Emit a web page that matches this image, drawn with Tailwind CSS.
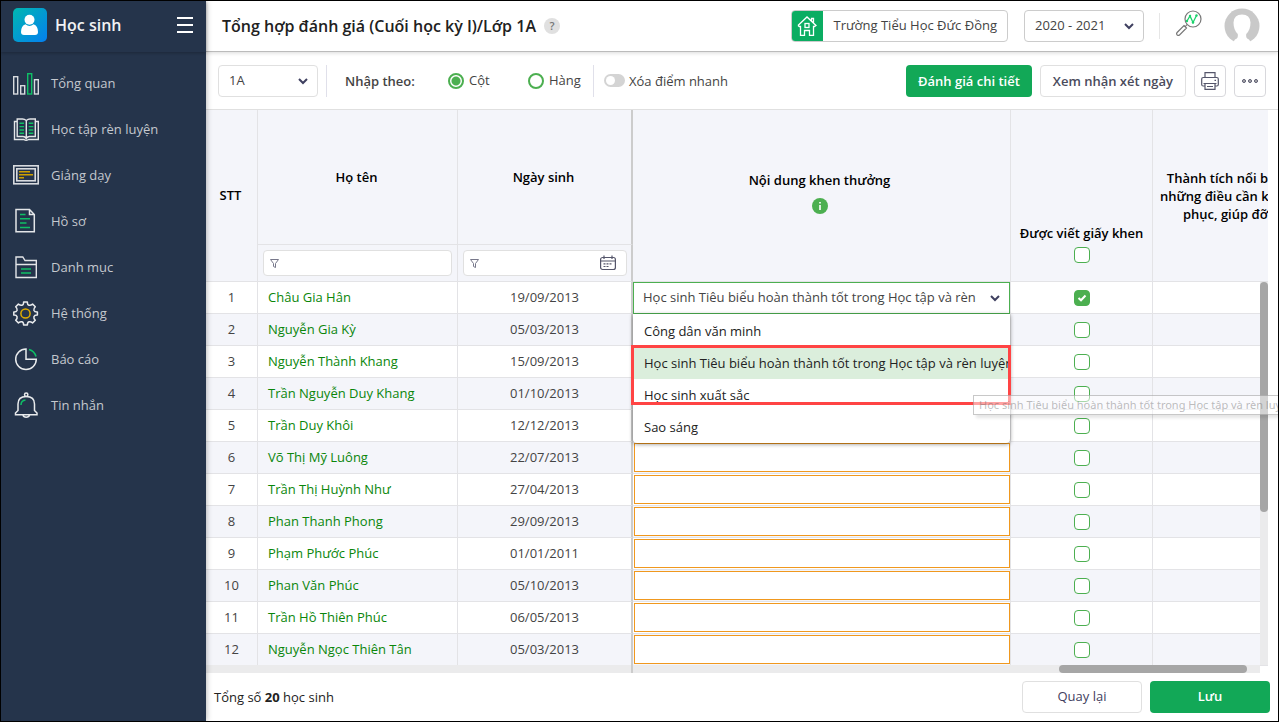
<!DOCTYPE html>
<html lang="vi">
  <head>
    <meta charset="UTF-8" />
    <meta name="viewport" content="width=device-width, initial-scale=1.0" />
    <title>Tổng hợp đánh giá</title>
    <script src="https://cdn.jsdelivr.net/npm/@tailwindcss/browser@4"></script>
  </head>
  <body class="flex h-screen overflow-hidden border border-black bg-white font-['Open_Sans',sans-serif] text-[13px] text-[#444]">
    <!-- Sidebar -->
    <aside class="relative z-10 flex w-[205px] shrink-0 flex-col bg-[#25344b] text-[#c4c8ce] shadow-[0_0_6px_rgba(0,0,0,0.35)]">
      <div class="flex h-[51px] items-center pl-3 pr-[13px] pb-1 shadow-[0_1px_3px_rgba(0,0,0,0.25)]">
        <svg class="size-[34px]" viewBox="0 0 34 34">
          <defs>
            <linearGradient id="logo" x1="0" y1="0" x2="1" y2="1">
              <stop offset="0" stop-color="#00b8b0" />
              <stop offset="1" stop-color="#047ff0" />
            </linearGradient>
          </defs>
          <rect width="34" height="34" rx="5" fill="url(#logo)" />
          <circle cx="16.500" cy="11.800" r="5" fill="#fff" />
          <path d="M12.500 16.300Q16.500 19.500 20.500 16.300Q25 18 25 24Q25 27 22 27H11Q8 27 8 24Q8 18 12.500 16.300Z" fill="#fff" />
        </svg>
        <span class="ml-2 flex-1 text-base font-semibold text-[#f1f2f4]">Học sinh</span>
        <button aria-label="Thu gọn menu">
          <svg class="size-4" viewBox="0 0 16 16" fill="#fff">
            <rect width="16" height="2" /><rect y="7" width="16" height="2" /><rect y="14" width="16" height="2" />
          </svg>
        </button>
      </div>
      <nav class="flex flex-col pt-2">
        <a href="#" class="flex h-[46px] items-center gap-3 pl-3">
          <svg class="size-[26px]" viewBox="0 0 26 26" fill="none" stroke="#d8dbdf" stroke-width="1.400">
            <rect x="0.700" y="6.700" width="4" height="17.300" /><rect x="7.700" y="15.700" width="4" height="8.300" />
            <rect x="14.700" y="3.700" width="4" height="20.300" stroke="#0fbf66" /><rect x="21.500" y="9.700" width="3.800" height="14.300" />
          </svg>
          <span class="pt-0.5">Tổng quan</span>
        </a>
        <a href="#" class="flex h-[46px] items-center gap-3 pl-3">
          <svg class="size-[26px]" viewBox="0 0 26 26" fill="none" stroke="#e3e5e8" stroke-width="1.400">
            <path d="M4 5.500H1.500V23.500H11Q13 25 15.500 23.500H25.300V5.500H22.500" />
            <path d="M13.300 4.500Q11.500 3 9.500 3H4.200V20.500H10Q12 20.500 13.300 22.500Q14.500 20.500 16.500 20.500H22.300V3H17Q15 3 13.300 4.500V22" />
            <path d="M6.500 7.200H11M6.500 10.600H11M6.500 14H11M6.500 17.300H11M15.700 7.200H20.300M15.700 10.600H20.300M15.700 14H20.300M15.700 17.300H20.300" stroke="#0fbf66" />
          </svg>
          <span class="pt-0.5">Học tập rèn luyện</span>
        </a>
        <a href="#" class="flex h-[46px] items-center gap-3 pl-3">
          <svg class="size-[26px]" viewBox="0 0 26 26" fill="none" stroke="#d8dbdf" stroke-width="1.600">
            <rect x="0.800" y="3.800" width="24.400" height="18" /><rect x="3.800" y="6.800" width="18.400" height="12" />
            <path d="M6 9.800H17M6 12.800H20M6 15.800H11" stroke="#cda000" />
          </svg>
          <span class="pt-0.5">Giảng dạy</span>
        </a>
        <a href="#" class="flex h-[46px] items-center gap-3 pl-3">
          <svg class="size-[26px]" viewBox="0 0 26 26" fill="none" stroke="#e3e5e8" stroke-width="1.500">
            <path d="M3 1.500H16.500L21.300 6.500V23.800H3ZM16.500 1.500V6.500H21.300" />
            <path d="M7 6.500H12.500M7 10.800H17M7 15H13.500M7 19.500H17" stroke="#0fbf66" />
          </svg>
          <span class="pt-0.5">Hồ sơ</span>
        </a>
        <a href="#" class="flex h-[46px] items-center gap-3 pl-3">
          <svg class="size-[26px]" viewBox="0 0 26 26" fill="none" stroke="#e3e5e8" stroke-width="1.400">
            <path d="M3 23.500V3H9.800L12 6.500H23.300V23.500ZM3 10.500H23.300" />
            <path d="M8 15H18M8 19H18" stroke="#0fbf66" />
          </svg>
          <span class="pt-0.5">Danh mục</span>
        </a>
        <a href="#" class="flex h-[46px] items-center gap-3 pl-3">
          <svg class="size-[26px]" viewBox="0 0 26 26" fill="none" stroke="#e9ebed" stroke-width="1.500" stroke-linejoin="round">
            <path d="M10.600 2H14.400Q14.300 5.200 16.200 5.200Q17.800 5.400 19.600 4.100L22.300 6.700Q20.500 8.500 20.900 10.200Q21.500 12 24.400 11.900V15.100Q21.500 15 20.900 16.800Q20.500 18.500 22.300 20.300L19.600 22.900Q17.800 21.600 16.200 21.800Q14.300 22 14.400 25H10.600Q10.700 22 8.800 21.800Q7.200 21.600 5.400 22.900L2.700 20.300Q4.500 18.500 4.100 16.800Q3.500 15 0.800 15.100V11.900Q3.500 12 4.100 10.200Q4.500 8.500 2.700 6.700L5.400 4.100Q7.200 5.400 8.800 5.200Q10.700 5.200 10.600 2Z" />
            <circle cx="12.500" cy="13.500" r="4.600" stroke="#e0ac00" />
          </svg>
          <span class="pt-0.5">Hệ thống</span>
        </a>
        <a href="#" class="flex h-[46px] items-center gap-3 pl-3">
          <svg class="size-[26px]" viewBox="0 0 26 26" fill="none" stroke="#e9ebed" stroke-width="1.500">
            <path d="M13 3A10.300 10.300 0 1 0 23.300 13.300H13Z" />
            <path d="M16 3.500Q21.500 5 23 10.500" stroke="#0fbf66" />
          </svg>
          <span class="pt-0.5">Báo cáo</span>
        </a>
        <a href="#" class="flex h-[46px] items-center gap-3 pl-3">
          <svg class="size-[26px]" viewBox="0 0 26 26" fill="none" stroke="#e9ebed" stroke-width="1.500">
            <path d="M5 18.500V12Q5 4.500 13.200 4.500Q21.500 4.500 21.500 12V18.500L24 21V22.700H2.500V21Z" />
            <circle cx="13.200" cy="2.800" r="1.700" /><path d="M10 23Q10.500 25.200 13.200 25.200Q16 25.200 16.500 23" />
            <path d="M8 13Q8 8.500 12.500 8" stroke="#0fbf66" />
          </svg>
          <span class="pt-0.5">Tin nhắn</span>
        </a>
      </nav>
    </aside>

    <main class="flex min-w-0 flex-1 flex-col">
      <!-- Top bar -->
      <header class="relative flex h-[51px] shrink-0 items-center border-b border-[#bbb] pl-4 pr-[18px] shadow-[0_1px_4px_rgba(0,0,0,0.15)]">
        <h1 class="text-base font-semibold text-[#212121]">Tổng hợp đánh giá (Cuối học kỳ I)/Lớp 1A</h1>
        <button class="ml-2 size-4 rounded-full bg-[#e0e0e0] text-[11px] font-semibold leading-4 text-[#757575]">?</button>
        <div class="ml-auto flex h-8 items-center overflow-hidden rounded border border-[#ccc] pr-[10px]">
          <span class="-my-px -ml-px flex size-8 items-center justify-center bg-[#0bad62]">
            <svg class="size-5" viewBox="0 0 20 20" fill="none" stroke="#fff" stroke-width="1.300">
              <path d="M1 9.500L10 1L19 9.500L17.500 10.500H16.500V19.300H12.500V14.500H7.500V19.300H3.500V10.500H2.300L1 9.500M14.500 5V2.500H16.500V7" />
              <rect x="8" y="7.500" width="4" height="4" />
            </svg>
          </span>
          <span class="pl-[11px]">Trường Tiểu Học Đức Đồng</span>
        </div>
        <div class="relative ml-4 w-[120px]">
          <select aria-label="Năm học" class="h-8 w-full appearance-none rounded border border-[#ccc] px-[10px]">
            <option>2020 - 2021</option>
          </select>
          <svg class="pointer-events-none absolute right-[10px] top-3 h-2 w-[10px]" viewBox="0 0 10 8" fill="none" stroke="#3f4060" stroke-width="2"><path d="M1 2L5 6L9 2" /></svg>
        </div>
        <span class="ml-[15px] h-[26px] w-px bg-[#e6e6e6]"></span>
        <button class="ml-4" aria-label="Tra cứu">
          <svg class="size-7 overflow-visible" viewBox="0.500 2.500 28 28" fill="none" stroke="#777" stroke-width="1.200">
            <circle cx="17.500" cy="9.500" r="8" /><path d="M11.500 15L9.500 17.500M8.500 16L11 18.500L3.800 25.700Q2 26.500 1.300 25Q0.700 24 1.600 23Z" />
            <path d="M11.500 11.500L14.500 6.500L17.500 13L21 6" stroke="#19d36b" stroke-width="1.300" />
            <g fill="#19d36b" stroke="none"><circle cx="11.500" cy="11.500" r="1.200" /><circle cx="14.500" cy="6.500" r="1.200" /><circle cx="17.500" cy="13" r="1.200" /><circle cx="21" cy="6" r="1.200" /></g>
          </svg>
        </button>
        <button class="ml-5" aria-label="Tài khoản">
          <svg class="size-9" viewBox="0 0 36 36">
            <circle cx="18" cy="18" r="17.500" fill="#c9c9c9" />
            <path d="M8 36L11 31.500Q14.500 30.500 13.800 26Q9.500 22 9.500 14.500Q10 6.500 18 6.500Q26 6.500 26.500 14.500Q26.500 22 22.200 26Q21.500 30.500 25 31.500L28 36Z" fill="#fff" />
          </svg>
        </button>
      </header>

      <!-- Toolbar -->
      <div class="flex h-[58px] shrink-0 items-center border-b border-[#e0e0e0] pl-3 pr-3">
        <div class="relative w-[100px]">
          <select aria-label="Lớp" class="h-8 w-full appearance-none rounded border border-[#e0e0e0] px-[10px]">
            <option>1A</option>
          </select>
          <svg class="pointer-events-none absolute right-[10px] top-3 h-2 w-[10px]" viewBox="0 0 10 8" fill="none" stroke="#3f4060" stroke-width="2"><path d="M1 2L5 6L9 2" /></svg>
        </div>
        <span class="ml-2 h-8 w-px bg-[#e0e0ea]"></span>
        <span class="ml-[18px] w-[103px] pt-0.5 font-semibold">Nhập theo:</span>
        <label class="flex w-20 items-center gap-[5px]">
          <input type="radio" name="mode" checked class="size-4 appearance-none rounded-full border-2 border-[#4caf50] checked:bg-[radial-gradient(circle,#4caf50_4px,transparent_5px)]" />
          Cột
        </label>
        <label class="flex w-[65px] items-center gap-[5px]">
          <input type="radio" name="mode" class="size-4 appearance-none rounded-full border-2 border-[#4caf50] checked:bg-[radial-gradient(circle,#4caf50_4px,transparent_5px)]" />
          Hàng
        </label>
        <span class="h-8 w-px bg-[#e0e0ea]"></span>
        <label class="ml-[10px] flex items-center gap-1">
          <input type="checkbox" role="switch" class="h-[13px] w-[21px] appearance-none rounded-full border-2 border-[#d4d4d4] bg-[#d4d4d4] before:block before:size-[9px] before:rounded-full before:bg-white checked:bg-[#4caf50]" />
          <span class="pt-0.5">Xóa điểm nhanh</span>
        </label>
        <div class="ml-auto flex gap-2">
          <button class="h-8 rounded bg-[#12a857] px-3 pt-0.5 font-semibold text-white">Đánh giá chi tiết</button>
          <button class="h-8 rounded border border-[#e0e0e0] px-3 pt-0.5 font-semibold text-[#4a4b5c]">Xem nhận xét ngày</button>
          <button class="flex size-8 items-center justify-center rounded border border-[#d8d8dc]" aria-label="In">
            <svg class="size-[18px]" viewBox="0 0 18 18" fill="none" stroke="#55566b" stroke-width="1.200">
              <path d="M4 5.500V0.700H14V5.500M4 14H2.200Q0.700 14 0.700 12.500V7Q0.700 5.500 2.200 5.500H15.800Q17.300 5.500 17.300 7V12.500Q17.300 14 15.800 14H14M2.500 11.500H15.500M4 11.500V17.300H14V11.500M6 14.500H12M13.500 8.300H15" />
            </svg>
          </button>
          <button class="flex size-8 items-center justify-center rounded border border-[#d8d8dc]" aria-label="Thêm">
            <svg class="h-4 w-4" viewBox="0 0 16 16" fill="#bbb" stroke="#55566b" stroke-width="1"><circle cx="2" cy="8" r="1.500" /><circle cx="8" cy="8" r="1.500" /><circle cx="14" cy="8" r="1.500" /></svg>
          </button>
        </div>
      </div>

      <!-- Grid -->
      <div class="relative mr-[10px] min-h-0 flex-1">
        <div class="h-full overflow-hidden">
          <table class="w-[calc(100%+32px)] table-fixed border-separate border-spacing-0">
            <colgroup>
              <col class="w-[52px]" />
              <col class="w-[200px]" />
              <col class="w-[175px]" />
              <col />
              <col class="w-[142px]" />
              <col class="w-[147px]" />
            </colgroup>
            <thead class="bg-[#f4f5fa] text-black">
              <tr class="h-[135px]">
                <th rowspan="2" class="border-b border-r border-[#e3e3e6] py-0 pl-0 pr-0.5 font-semibold">STT</th>
                <th class="border-b border-r border-[#e3e3e6] pb-0 pl-0 pr-0.5 pt-0.5 font-semibold">Họ tên</th>
                <th class="border-b border-r-2 border-b-[#e3e3e6] border-r-[#ccc] pb-0 pl-0 pr-0.5 pt-0.5 font-semibold">Ngày sinh</th>
                <th rowspan="2" class="border-b border-r border-[#e3e3e6] pb-[6px] pl-0 pr-1 pt-0 font-semibold">
                  Nội dung khen thưởng
                  <svg class="mx-auto mt-2 size-4" viewBox="0 0 16 16"><circle cx="8" cy="8" r="8" fill="#4caf50" /><path d="M7.200 4H8.800V5.500H7.200ZM7.200 7H8.800V12H7.200Z" fill="#fff" /></svg>
                </th>
                <th rowspan="2" class="border-b border-r border-[#e3e3e6] px-0 pb-[18px] pt-0 align-bottom font-semibold">
                  <label for="all">Được viết giấy khen</label>
                  <input id="all" type="checkbox" class="mx-auto mt-1 block size-4 appearance-none rounded border border-[#4caf50] bg-white" />
                </th>
                <th rowspan="2" class="border-b border-[#e3e3e6] py-0 pl-0 pr-0.5 font-semibold leading-[18px]">Thành tích nổi bật,<br />những điều cần khắc<br />phục, giúp đỡ</th>
              </tr>
              <tr class="h-[37px]">
                <th class="border-b border-r border-[#e3e3e6] px-[5px] py-0">
                  <label class="flex h-[26px] items-center rounded border border-[#e0e0e0] bg-white px-[6px]">
                    <svg class="h-[9px] w-[9px]" viewBox="0 0 9 9" fill="none" stroke="#77788a"><path d="M0.500 0.500H8.500L5.500 4.500V8.500L3.500 7.500V4.500Z" /></svg>
                    <input type="text" aria-label="Lọc họ tên" class="min-w-0 flex-1 px-1 font-normal outline-none" />
                  </label>
                </th>
                <th class="border-b border-r-2 border-b-[#e3e3e6] border-r-[#ccc] py-0 pl-[5px] pr-1">
                  <label class="flex h-[26px] items-center rounded border border-[#e0e0e0] bg-white pl-[6px] pr-[10px]">
                    <svg class="h-[9px] w-[9px]" viewBox="0 0 9 9" fill="none" stroke="#77788a"><path d="M0.500 0.500H8.500L5.500 4.500V8.500L3.500 7.500V4.500Z" /></svg>
                    <input type="text" aria-label="Lọc ngày sinh" class="min-w-0 flex-1 px-1 font-normal outline-none" />
                    <svg class="size-4" viewBox="0 0 16 16" fill="none" stroke="#55566b" stroke-width="1.200">
                      <rect x="0.600" y="2.500" width="14.800" height="12" rx="2" /><path d="M0.600 6H15.400M4 0.500V4M12 0.500V4" />
                      <path d="M3.500 8.800H12.500M3.500 11.500H9.500" stroke-dasharray="2 1" />
                    </svg>
                  </label>
                </th>
              </tr>
            </thead>
            <tbody id="rows"></tbody>
          </table>
        </div>

        <!-- scrollbars -->
        <div class="absolute bottom-2 right-0 top-[172px] w-2 bg-[#ebebec]">
          <div class="h-3/5 rounded bg-[#a6a6a6]"></div>
        </div>
        <div class="absolute bottom-0 left-0 right-2 h-2 bg-[#ebebec] pr-[13px]">
          <div class="ml-auto h-2 w-[188px] rounded bg-[#a6a6a6]"></div>
        </div>
        <div class="absolute bottom-0 left-[425px] h-2 w-[2px] bg-[#ccc]"></div>

        <div role="tooltip" class="absolute left-[767px] top-[285px] z-30 h-5 whitespace-nowrap border border-[#767676]/40 bg-white/50 px-[5px] font-['Noto_Sans',sans-serif] text-[11px] leading-[18px] text-[#575757]/40 shadow-[3px_3px_3px_rgba(0,0,0,0.1)]">
          Học sinh Tiêu biểu hoàn thành tốt trong Học tập và rèn luyện
        </div>
      </div>

      <!-- Footer -->
      <footer class="flex h-12 shrink-0 items-center gap-2 px-2">
        <p class="mr-auto pt-0.5 text-[#222]">Tổng số <b>20</b> học sinh</p>
        <button class="h-8 w-[120px] rounded border border-[#e0e0e0] text-[#3f4060]">Quay lại</button>
        <button class="h-8 w-[120px] rounded bg-[#12a857] font-semibold text-white">Lưu</button>
      </footer>
    </main>

    <script>
      const students = [
        ["Châu Gia Hân", "19/09/2013"],
        ["Nguyễn Gia Kỳ", "05/03/2013"],
        ["Nguyễn Thành Khang", "15/09/2013"],
        ["Trần Nguyễn Duy Khang", "01/10/2013"],
        ["Trần Duy Khôi", "12/12/2013"],
        ["Võ Thị Mỹ Luông", "22/07/2013"],
        ["Trần Thị Huỳnh Như", "27/04/2013"],
        ["Phan Thanh Phong", "29/09/2013"],
        ["Phạm Phước Phúc", "01/01/2011"],
        ["Phan Văn Phúc", "05/10/2013"],
        ["Trần Hồ Thiên Phúc", "06/05/2013"],
        ["Nguyễn Ngọc Thiên Tân", "05/03/2013"],
      ];

      // Row being edited: select with its open list
      const editor = `
        <select aria-label="Nội dung khen thưởng" class="-mb-px block h-8 w-full appearance-none border border-[#4caf50] bg-white pl-[9px] pr-8">
          <option>Học sinh Tiêu biểu hoàn thành tốt trong Học tập và rèn luyện</option>
        </select>
        <svg class="pointer-events-none absolute right-[10px] top-3 h-2 w-[10px]" viewBox="0 0 10 8" fill="none" stroke="#3f4060" stroke-width="2"><path d="M1 2L5 6L9 2" /></svg>
        <ul class="absolute inset-x-0 top-8 z-10 overflow-hidden rounded-b bg-white pt-px text-[#222] shadow-[0_1px_4px_rgba(0,0,0,0.45)]">
          <li class="h-8 whitespace-nowrap px-[11px] leading-8">Công dân văn minh</li>
          <li class="h-8 overflow-hidden whitespace-nowrap bg-[#dbeedc] px-[11px] leading-8">Học sinh Tiêu biểu hoàn thành tốt trong Học tập và rèn luyện</li>
          <li class="h-8 whitespace-nowrap px-[11px] leading-8">Học sinh xuất sắc</li>
          <li class="h-8 whitespace-nowrap px-[11px] leading-8">Sao sáng</li>
        </ul>
        <div class="absolute -left-[2px] -right-px top-[63px] z-20 h-[60px] border-3 border-[#ff4444]"></div>`;

      document.getElementById("rows").innerHTML = students
        .map(([name, birthday], i) => `
          <tr class="h-8 bg-white even:bg-[#f4f5fa]">
            <td class="border-b border-r border-[#e3e3e6] p-0 text-center">${i + 1}</td>
            <td class="border-b border-r border-[#e3e3e6] py-0 pl-[10px] pr-0"><a href="#" class="text-[#0a860a]">${name}</a></td>
            <td class="border-b border-r-2 border-b-[#e3e3e6] border-r-[#ccc] p-0 text-center">${birthday}</td>
            <td class="relative border-b border-r border-[#e3e3e6] p-0">
              ${i === 0 ? editor : `<div class="py-px pl-px"><input type="text" aria-label="Khen thưởng ${name}" class="block h-[29px] w-full border border-[#f0981e] bg-white px-2" /></div>`}
            </td>
            <td class="border-b border-r border-[#e3e3e6] p-0">
              <label class="mx-auto grid size-4">
                <input type="checkbox" aria-label="Giấy khen ${name}" ${i === 0 ? "checked" : ""} class="peer col-start-1 row-start-1 size-4 appearance-none rounded border border-[#4caf50] bg-white checked:bg-[#4caf50]" />
                <svg class="invisible col-start-1 row-start-1 size-4 peer-checked:visible" viewBox="0 0 16 16" fill="none" stroke="#fff" stroke-width="2"><path d="M4.500 8L7 10.300L11.500 5.500" /></svg>
              </label>
            </td>
            <td class="border-b border-[#e3e3e6] p-0"></td>
          </tr>`)
        .join("");
    </script>
  </body>
</html>
